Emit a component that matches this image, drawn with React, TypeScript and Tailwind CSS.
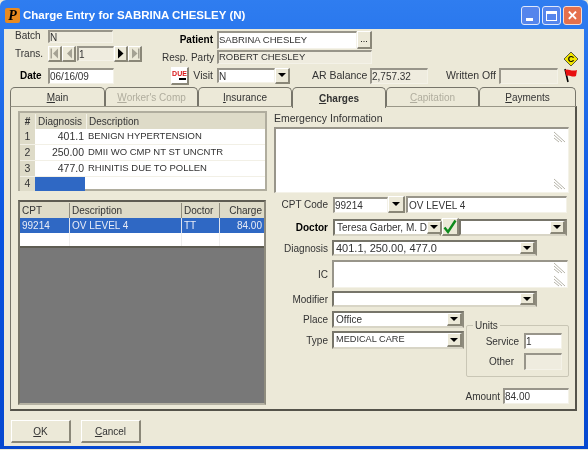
import type { ReactNode } from "react";

const sunken = "border-t-2 border-l-2 border-t-[#98958a] border-l-[#98958a] border-r border-b border-r-[#f4f2e8] border-b-[#f4f2e8]";
const raised = "border-t border-l border-t-white border-l-white border-r-2 border-b-2 border-r-[#8a8778] border-b-[#8a8778] bg-[#ece9d8]";
const heavy = "border-2 border-t-[#77756a] border-l-[#77756a] border-r-[#8f8c7e] border-b-[#d8d5c6]";

function Field({ className, text, dim, size = "text-[10px]" }: { className: string; text?: string; dim?: boolean; size?: string }) {
  return (
    <div className={`${sunken} ${dim ? "bg-[#efecdf]" : "bg-white"} ${className} ${size} flex items-center overflow-hidden whitespace-nowrap text-[#333]`}>
      {text}
    </div>
  );
}

function Arrow({ className }: { className?: string }) {
  return <div className={`h-0 w-0 border-x-[4px] border-t-[4px] border-x-transparent border-t-black ${className ?? ""}`} />;
}

function DropBtn({ className }: { className: string }) {
  return (
    <div className={`${raised} ${className} flex shrink-0 items-center justify-center`}>
      <Arrow />
    </div>
  );
}

function Combo({ className, text, size = "text-[10px]" }: { className: string; text?: string; size?: string }) {
  return (
    <div className={`${heavy} ${className} ${size} flex items-center justify-between bg-white pl-[2px] whitespace-nowrap text-[#333]`}>
      <span>{text}</span>
      <DropBtn className="h-full w-[15px]" />
    </div>
  );
}

function Lbl({ children, className, bold, wide }: { children: ReactNode; className?: string; bold?: boolean; wide?: boolean }) {
  return (
    <div className={`shrink-0 whitespace-nowrap ${wide ? "text-[10.5px]" : "text-[10px]"} ${bold ? "font-bold text-black" : "text-[#333]"} ${className ?? ""}`}>
      {children}
    </div>
  );
}

function Grip() {
  return (
    <svg width="14" height="12" viewBox="0 0 14 12" className="shrink-0">
      <path d="M2 1 L13 11 M2 4 L10 11 M2 7 L7 11" stroke="#b5b3a8" strokeWidth="1" fill="none" />
    </svg>
  );
}

function NavBtn({ dir, last, on }: { dir: "l" | "r"; last?: boolean; on?: boolean }) {
  const color = on ? "#000" : "#a5a294";
  return (
    <div className={`${raised} flex h-[16px] w-[14px] items-center justify-center border-t-[#ece9d8] border-l-[#ece9d8]`}>
      <svg width="10" height="11" viewBox="0 0 10 11">
        {dir === "l" ? <path d="M8 0.5V10.5L3 5.5Z" fill={color} /> : <path d="M2 0.5V10.5L7.5 5.5Z" fill={color} />}
        {last && <rect x={dir === "l" ? 0.5 : 8} y="0.5" width="1.5" height="10" fill={color} />}
      </svg>
    </div>
  );
}

const tabs = [
  { name: "Main", key: "M", rest: "ain", w: "w-[95px]" },
  { name: "Worker's Comp", key: "W", rest: "orker's Comp", w: "w-[93px]", off: true },
  { name: "Insurance", key: "I", rest: "nsurance", w: "w-[94px]" },
  { name: "Charges", key: "C", rest: "harges", w: "w-[94px]", active: true },
  { name: "Capitation", key: "C", rest: "apitation", w: "w-[93px]", off: true },
  { name: "Payments", key: "P", rest: "ayments", w: "w-[97px]" },
];

const diagnoses = [
  ["1", "401.1", "BENIGN HYPERTENSION"],
  ["2", "250.00", "DMII WO CMP NT ST UNCNTR"],
  ["3", "477.0", "RHINITIS DUE TO POLLEN"],
];

export default function App() {
  return (
    <div className="h-[450px] w-[588px] overflow-hidden bg-[#ece9d8] font-['Liberation_Sans',sans-serif] blur-[0.5px]">
      <div className="flex h-[449px] w-[588px] flex-col rounded-t-[6px] bg-gradient-to-b from-[#2f7df0] via-[#0a54e0] to-[#0648d0] pt-[2px]">
        {/* title bar */}
        <div className="flex h-[27px] shrink-0 items-center pr-[6px] pl-[5px]">
          <div className="mr-[3px] flex h-[15px] w-[15px] items-center justify-center rounded-[2px] bg-[#e88a20] font-['Liberation_Serif',serif] text-[14px] font-bold text-black italic">
            P
          </div>
          <div className="flex-1 text-[11.5px] font-bold text-white">Charge Entry for SABRINA CHESLEY (N)</div>
          <div className="flex gap-[2px]">
            <div className="flex h-[19px] w-[19px] items-end rounded-[3px] border border-[#dfe8fb] bg-[#5585ec] pb-[3px] pl-[4px]">
              <div className="h-[3px] w-[7px] bg-white" />
            </div>
            <div className="flex h-[19px] w-[19px] items-center justify-center rounded-[3px] border border-[#dfe8fb] bg-[#5585ec]">
              <div className="h-[10px] w-[11px] border border-t-[3px] border-white" />
            </div>
            <div className="flex h-[19px] w-[19px] items-center justify-center rounded-[3px] border border-[#f6dcd2] bg-[#e5704c] text-[13px] font-bold text-white">
              ✕
            </div>
          </div>
        </div>

        {/* client area */}
        <div className="mx-[4px] mb-[3px] flex flex-1 flex-col bg-[#ece9d8]">
          {/* header top */}
          <div className="flex h-[38px] items-start pt-[1px] pl-[11px]">
            <div className="flex w-[147px] flex-col">
              <div className="flex h-[13px] items-start">
                <Lbl className="w-[33px] leading-[12px]">Batch</Lbl>
                <Field dim className="h-[13px] w-[65px]" text="N" />
              </div>
              <div className="mt-[2px] flex h-[17px] items-center">
                <Lbl className="w-[33px]">Trans.</Lbl>
                <NavBtn dir="l" last />
                <NavBtn dir="l" />
                <Field dim className="ml-[1px] h-[15px] w-[37px]" text="1" />
                <NavBtn dir="r" on />
                <NavBtn dir="r" last />
              </div>
            </div>
            <div className="flex flex-col">
              <div className="flex h-[19px] items-center">
                <Lbl bold className="w-[51px] text-right">Patient</Lbl>
                <Field className="ml-[4px] h-[18px] w-[140px]" size="text-[9.5px]" text="SABRINA CHESLEY" />
                <div className={`${raised} flex h-[18px] w-[15px] items-center justify-center text-[9px] leading-none`}>...</div>
              </div>
              <div className="mt-[1px] flex h-[14px] items-center">
                <Lbl className="w-[51px] text-right">Resp. Party</Lbl>
                <Field dim className="ml-[4px] h-[14px] w-[155px]" size="text-[9.5px]" text="ROBERT CHESLEY" />
              </div>
            </div>
            <div className="flex flex-1 justify-end self-end pr-[5px]">
              <svg width="16" height="16" viewBox="0 0 16 16">
                <path d="M8 1 L15 8 L8 15 L1 8Z" fill="#f2e600" stroke="#333" strokeWidth="0.8" />
                <text x="8" y="11" textAnchor="middle" fontSize="9" fontWeight="bold" fontFamily="Liberation Sans">C</text>
              </svg>
            </div>
          </div>

          {/* header bottom */}
          <div className="flex h-[17px] items-center pl-[11px]">
            <Lbl bold className="w-[33px] pl-[5px]">Date</Lbl>
            <Field className="h-[16px] w-[66px]" text="06/16/09" />
            <div className={`${raised} ml-[57px] flex h-[18px] w-[18px] flex-col items-center justify-center bg-white text-[7px] leading-none font-bold text-[#d81818]`}>
              DUE
              <div className="mt-[1px] ml-[6px] h-[2px] w-[7px] bg-black" />
            </div>
            <Lbl wide className="w-[24px] text-right">Visit</Lbl>
            <Field className="ml-[4px] h-[15px] w-[58px]" text="N" />
            <DropBtn className="h-[16px] w-[15px]" />
            <Lbl wide className="ml-[22px] w-[54px]">AR Balance</Lbl>
            <Field dim className="ml-[4px] h-[16px] w-[58px]" text="2,757.32" />
            <Lbl wide className="ml-[18px] w-[49px]">Written Off</Lbl>
            <Field dim className="ml-[4px] h-[16px] w-[59px]" />
            <svg width="15" height="15" viewBox="0 0 15 15" className="ml-[5px]">
              <path d="M2 1 L5 14" stroke="#000" strokeWidth="1.6" />
              <path d="M2 2 C5 0 8 4 14 2 L13 8 C9 10 6 6 3.5 8Z" fill="#e81010" />
            </svg>
          </div>

          {/* tabs */}
          <div className="mt-[1px] flex h-[21px] items-end pl-[6px]">
            {tabs.map((t) => (
              <div
                key={t.name}
                className={`${t.w} relative z-10 flex shrink-0 items-center justify-center rounded-t-[5px] border border-[#77756a] text-[10px] ${
                  t.active ? "-mb-[2px] h-[21px] border-b-0 bg-[#ece9d8] font-bold text-[#222]" : "h-[19px] border-b-0"
                } ${t.off ? "text-[#b0ad9e]" : "text-[#333]"}`}
              >
                <span className="underline">{t.key}</span>
                {t.rest}
              </div>
            ))}
          </div>

          {/* tab panel */}
          <div className="ml-[6px] flex h-[305px] w-[567px] border border-t-[#9a9788] border-l-[#77756a] border-r-2 border-b-2 border-r-[#55534a] border-b-[#55534a] pt-[4px]">
            {/* left column */}
            <div className="ml-[7px] flex w-[249px] flex-col">
              <div className="flex h-[80px] flex-col border-2 border-[#b0ad9e] bg-white">
                <div className="flex h-[16px] shrink-0 items-center bg-[#dedbc8] text-[10px] text-[#333]">
                  <div className="w-[15px] text-center font-bold">#</div>
                  <div className="w-[51px] border-l border-[#f4f2e8] pl-[2px]">Diagnosis</div>
                  <div className="flex-1 border-l border-[#f4f2e8] pl-[2px]">Description</div>
                </div>
                {diagnoses.map(([n, code, desc]) => (
                  <div key={n} className="flex h-[16px] items-center border-b border-[#f2f0e6] text-[9.5px] text-[#333]">
                    <div className="flex h-full w-[15px] items-center justify-center bg-[#dedbc8] text-[10.5px]">{n}</div>
                    <div className="w-[51px] pr-[2px] text-right text-[10.5px]">{code}</div>
                    <div className="flex-1 pl-[2px] whitespace-nowrap">{desc}</div>
                  </div>
                ))}
                <div className="flex h-[14px] text-[10.5px] text-[#333]">
                  <div className="flex h-full w-[15px] items-center justify-center bg-[#dedbc8]">4</div>
                  <div className="w-[50px] bg-[#2f68c4]" />
                </div>
              </div>

              <div className="mt-[9px] flex h-[205px] w-[248px] flex-col border-2 border-[#5e5c52] border-r-[#8f8c7e] border-b-[#b5b2a3] border-l-[#77756a] bg-[#787878]">
                <div className="flex h-[16px] shrink-0 items-center bg-[#dedbc8] text-[10px] text-[#333]">
                  <div className="w-[49px] pl-[2px]">CPT</div>
                  <div className="w-[112px] border-l border-[#8f8c7e] pl-[2px]">Description</div>
                  <div className="w-[38px] border-l border-[#8f8c7e] pl-[2px]">Doctor</div>
                  <div className="flex-1 border-l border-[#8f8c7e] pr-[2px] text-right">Charge</div>
                </div>
                <div className="flex h-[15px] shrink-0 items-center bg-[#2f68c4] text-[10px] text-[#e8ecf6]">
                  <div className="w-[49px] pl-[2px]">99214</div>
                  <div className="w-[112px] border-l border-[#dfe4ee] pl-[2px]">OV LEVEL 4</div>
                  <div className="w-[38px] border-l border-[#dfe4ee] pl-[2px]">TT</div>
                  <div className="flex-1 border-l border-[#dfe4ee] pr-[2px] text-right">84.00</div>
                </div>
                <div className="flex h-[15px] shrink-0 border-b-2 border-[#5e5c52] bg-white">
                  <div className="w-[49px]" />
                  <div className="w-[112px] border-l border-[#eeeeee]" />
                  <div className="w-[38px] border-l border-[#eeeeee]" />
                  <div className="flex-1 border-l border-[#eeeeee]" />
                </div>
              </div>
            </div>

            {/* right column */}
            <div className="ml-[7px] flex w-[295px] flex-col">
              <Lbl wide className="h-[16px] leading-[14px]">Emergency Information</Lbl>
              <div className={`${sunken} flex h-[66px] w-[295px] flex-col items-end justify-between bg-white p-[2px]`}>
                <Grip />
                <Grip />
              </div>

              <div className="mt-[3px] flex h-[17px] items-center">
                <Lbl className="w-[54px] text-right">CPT Code</Lbl>
                <Field className="ml-[5px] h-[16px] w-[55px]" text="99214" />
                <DropBtn className="h-[17px] w-[17px]" />
                <Field className="ml-[1px] h-[17px] w-[161px] pl-[1px]" text="OV LEVEL 4" />
              </div>

              <div className="mt-[5px] flex h-[18px] items-center">
                <Lbl bold className="w-[54px] text-right">Doctor</Lbl>
                <Combo className="ml-[5px] h-[17px] w-[108px]" text="Teresa Garber, M. D" />
                <div className={`${raised} ml-[1px] flex h-[18px] w-[17px] items-center justify-center`}>
                  <svg width="14" height="15" viewBox="0 0 14 15" className="shrink-0">
                    <path d="M1.5 8.5 L5 13 L12.5 1.5" stroke="#0d8a1c" strokeWidth="2.4" fill="none" />
                  </svg>
                </div>
                <Combo className="h-[17px] w-[108px]" />
              </div>

              <div className="mt-[4px] flex h-[16px] items-center">
                <Lbl className="w-[54px] text-right">Diagnosis</Lbl>
                <Combo className="ml-[4px] h-[16px] w-[205px]" size="text-[11px]" text="401.1, 250.00, 477.0" />
              </div>

              <div className="mt-[4px] flex h-[28px] items-center">
                <Lbl className="w-[54px] text-right">IC</Lbl>
                <div className={`${sunken} ml-[4px] flex h-[28px] w-[236px] flex-col items-end justify-between bg-white pr-[1px]`}>
                  <Grip />
                  <Grip />
                </div>
              </div>

              <div className="mt-[3px] flex h-[16px] items-center">
                <Lbl className="w-[54px] text-right">Modifier</Lbl>
                <Combo className="ml-[4px] h-[16px] w-[205px]" />
              </div>

              <div className="flex">
                <div className="flex flex-col">
                  <div className="mt-[4px] flex h-[17px] items-center">
                    <Lbl className="w-[54px] text-right">Place</Lbl>
                    <Combo className="ml-[4px] h-[17px] w-[132px]" text="Office" />
                  </div>
                  <div className="mt-[3px] flex h-[18px] items-center">
                    <Lbl className="w-[54px] text-right">Type</Lbl>
                    <Combo className="ml-[4px] h-[18px] w-[132px]" size="text-[9.2px]" text="MEDICAL CARE" />
                  </div>
                </div>
                <div className="relative mt-[18px] ml-[2px] flex h-[52px] w-[103px] flex-col rounded-[2px] border border-[#c9c6b5] pt-[7px]">
                  <Lbl className="absolute -top-[6px] left-[6px] bg-[#ece9d8] px-[2px] leading-[12px]">Units</Lbl>
                  <div className="flex h-[16px] items-center">
                    <Lbl className="w-[52px] text-right">Service</Lbl>
                    <Field className="ml-[5px] h-[16px] w-[38px]" text="1" />
                  </div>
                  <div className="mt-[4px] flex h-[17px] items-center">
                    <Lbl className="w-[47px] text-right">Other</Lbl>
                    <Field dim className="ml-[10px] h-[17px] w-[38px]" />
                  </div>
                </div>
              </div>

              <div className="mt-[11px] flex h-[16px] items-center justify-end">
                <Lbl>Amount</Lbl>
                <Field className="ml-[3px] h-[16px] w-[66px]" text="84.00" />
              </div>
            </div>
          </div>

          {/* footer buttons */}
          <div className="mt-[9px] flex gap-[10px] pl-[7px]">
            <div className={`${raised} flex h-[23px] w-[60px] items-center justify-center text-[10px] text-[#333]`}>
              <span className="underline">O</span>K
            </div>
            <div className={`${raised} flex h-[23px] w-[60px] items-center justify-center text-[10px] text-[#333]`}>
              <span className="underline">C</span>ancel
            </div>
          </div>
        </div>
      </div>
    </div>
  );
}
